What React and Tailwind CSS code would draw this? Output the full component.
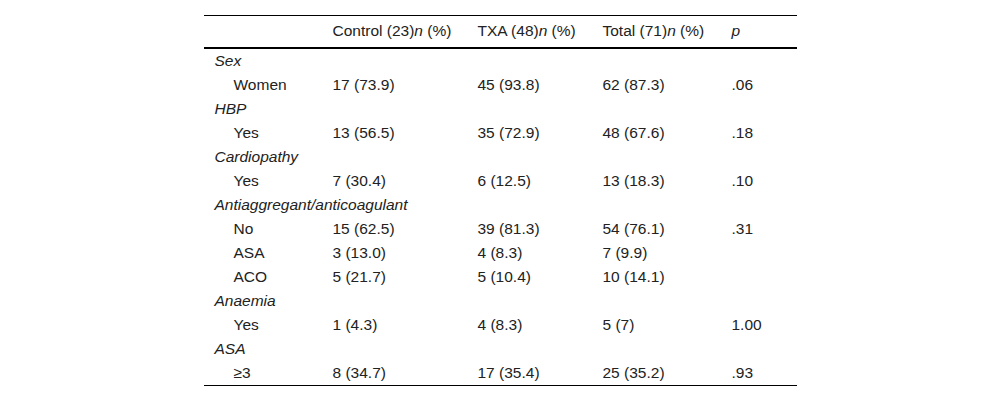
const groups = [
  { label: "Sex", rows: [["Women", "17 (73.9)", "45 (93.8)", "62 (87.3)", ".06"]] },
  { label: "HBP", rows: [["Yes", "13 (56.5)", "35 (72.9)", "48 (67.6)", ".18"]] },
  { label: "Cardiopathy", rows: [["Yes", "7 (30.4)", "6 (12.5)", "13 (18.3)", ".10"]] },
  {
    label: "Antiaggregant/anticoagulant",
    rows: [
      ["No", "15 (62.5)", "39 (81.3)", "54 (76.1)", ".31"],
      ["ASA", "3 (13.0)", "4 (8.3)", "7 (9.9)", ""],
      ["ACO", "5 (21.7)", "5 (10.4)", "10 (14.1)", ""],
    ],
  },
  { label: "Anaemia", rows: [["Yes", "1 (4.3)", "4 (8.3)", "5 (7)", "1.00"]] },
  { label: "ASA", rows: [["≥3", "8 (34.7)", "17 (35.4)", "25 (35.2)", ".93"]] },
];

function Head({ name }) {
  return (
    <th className="px-[11px] text-left font-normal">
      {name}<i>n</i> (%)
    </th>
  );
}

export default function App() {
  return (
    <div className="min-h-screen bg-white pt-[15px] font-['Liberation_Sans',Arial,sans-serif] text-[15.5px] leading-[24px] text-[#222]">
      <table className="mx-auto w-[593px] table-fixed border-collapse border-t border-b border-black">
        <colgroup>
          <col className="w-[118px]" />
          <col className="w-[145px]" />
          <col className="w-[125px]" />
          <col className="w-[129px]" />
          <col className="w-[76px]" />
        </colgroup>
        <thead>
          <tr className="h-[32px] border-b-2 border-black">
            <th />
            <Head name="Control (23)" />
            <Head name="TXA (48)" />
            <Head name="Total (71)" />
            <th className="px-[11px] text-left font-normal"><i>p</i></th>
          </tr>
        </thead>
        <tbody>
          {groups.map((g) => (
            <>
              <tr key={g.label} className="h-[24px]">
                <td colSpan={5} className="whitespace-nowrap px-[11px] italic">{g.label}</td>
              </tr>
              {g.rows.map((r) => (
                <tr key={g.label + r[0]} className="h-[24px]">
                  <td className="pl-[30px]">{r[0]}</td>
                  {r.slice(1).map((c, i) => (
                    <td key={i} className="px-[11px]">{c}</td>
                  ))}
                </tr>
              ))}
            </>
          ))}
        </tbody>
      </table>
    </div>
  );
}
